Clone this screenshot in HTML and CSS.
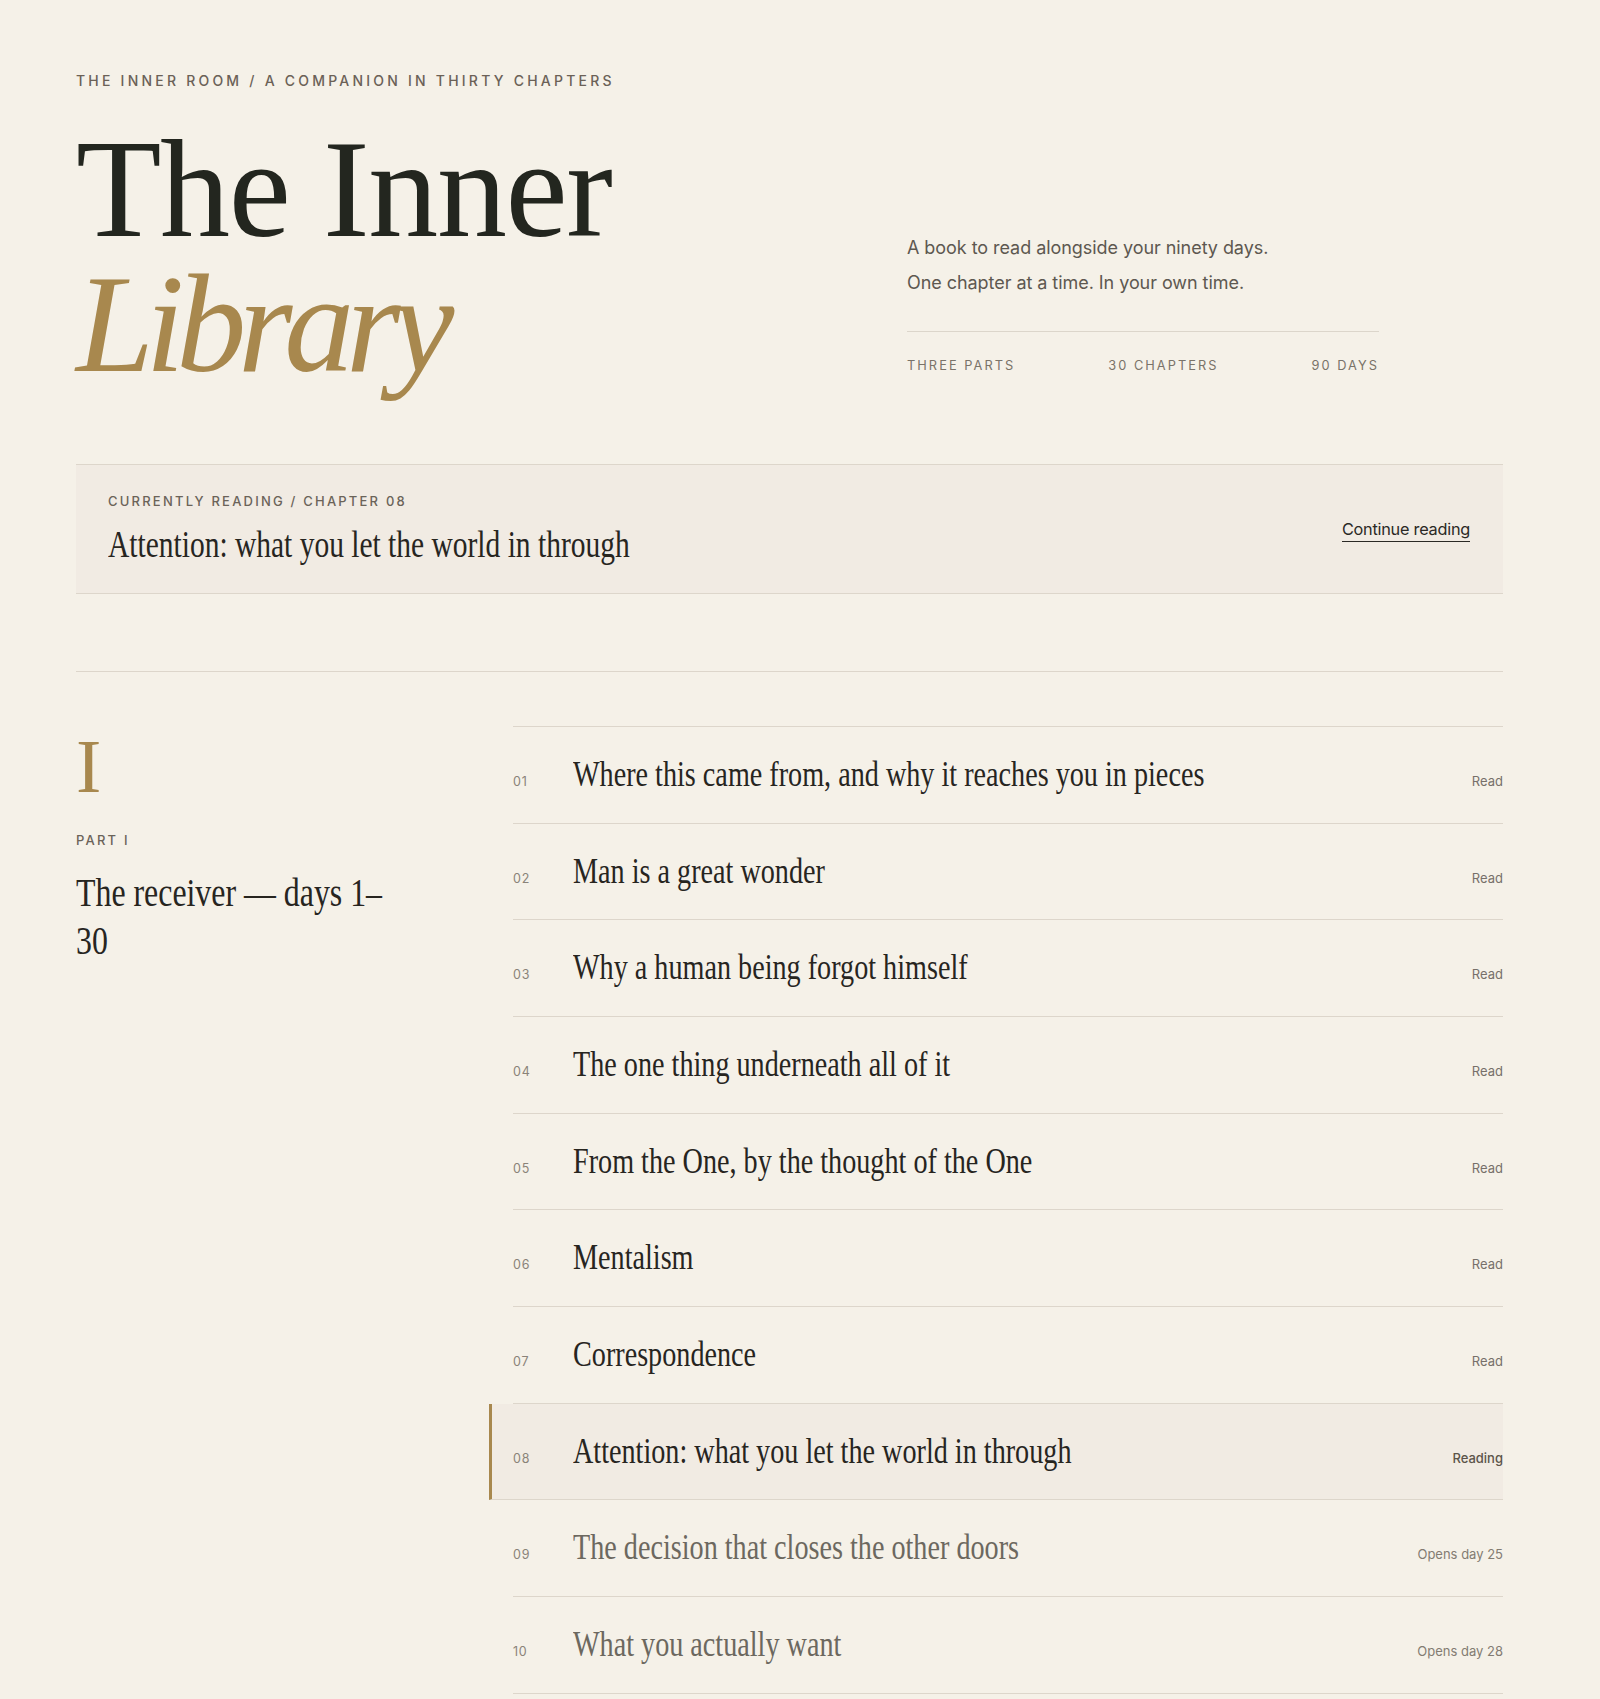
FILE: index.html
```html
<!DOCTYPE html>
<html lang="en">
<head>
<meta charset="utf-8">
<title>The Inner Library</title>
<link rel="stylesheet" href="styles.css">
</head>
<body>
<div class="page">
  <header class="hero">
    <div class="hero-main">
      <p class="eyebrow">The Inner Room / A Companion in Thirty Chapters</p>
      <h1 class="title"><span class="t1">The Inner</span><span class="t2">Library</span></h1>
    </div>
    <div class="hero-side">
      <p class="lede">A book to read alongside your ninety days.</p>
      <p class="lede">One chapter at a time. In your own time.</p>
      <div class="stats">
        <span>Three parts</span>
        <span>30 chapters</span>
        <span>90 days</span>
      </div>
    </div>
  </header>

  <section class="current">
    <div class="current-text">
      <p class="label">Currently reading / Chapter 08</p>
      <h2 class="current-title"><span class="cond">Attention: what you let the world in through</span></h2>
    </div>
    <a class="continue" href="#ch08">Continue reading</a>
  </section>

  <section class="part">
    <div class="part-head">
      <div class="numeral">I</div>
      <p class="label part-label">Part I</p>
      <h3 class="part-title"><span class="cond">The receiver — days 1–30</span></h3>
    </div>
    <ol class="chapters">
      <li class="row"><span class="num">01</span><span class="ch-title">Where this came from, and why it reaches you in pieces</span><span class="status">Read</span></li>
      <li class="row"><span class="num">02</span><span class="ch-title">Man is a great wonder</span><span class="status">Read</span></li>
      <li class="row"><span class="num">03</span><span class="ch-title">Why a human being forgot himself</span><span class="status">Read</span></li>
      <li class="row"><span class="num">04</span><span class="ch-title">The one thing underneath all of it</span><span class="status">Read</span></li>
      <li class="row"><span class="num">05</span><span class="ch-title">From the One, by the thought of the One</span><span class="status">Read</span></li>
      <li class="row"><span class="num">06</span><span class="ch-title">Mentalism</span><span class="status">Read</span></li>
      <li class="row"><span class="num">07</span><span class="ch-title">Correspondence</span><span class="status">Read</span></li>
      <li class="row row-current" id="ch08"><span class="num">08</span><span class="ch-title">Attention: what you let the world in through</span><span class="status">Reading</span></li>
      <li class="row row-locked"><span class="num">09</span><span class="ch-title">The decision that closes the other doors</span><span class="status">Opens day 25</span></li>
      <li class="row row-locked"><span class="num">10</span><span class="ch-title">What you actually want</span><span class="status">Opens day 28</span></li>
    </ol>
  </section>
</div>
</body>
</html>
```

FILE: styles.css
```css
html, body {
  margin: 0;
  padding: 0;
  background: #f5f1e8;
}

body {
  font-family: "Inter", "Liberation Sans", sans-serif;
  color: #2a2824;
}

.page {
  padding: 71px 97px 0 76px;
}

/* ---------- hero ---------- */
.hero {
  display: grid;
  grid-template-columns: 831px 472px;
  align-items: end;
}

.eyebrow {
  margin: 0 0 30px;
  font-size: 14px;
  line-height: 20px;
  letter-spacing: 0.23em;
  text-transform: uppercase;
  color: #6b6157;
  font-weight: 500;
}

.title {
  margin: 0;
  font-family: "Liberation Serif", "Times New Roman", serif;
  font-weight: 400;
  font-size: 140px;
  line-height: 135px;
  letter-spacing: -0.01em;
  color: #23261f;
}

.title .t1,
.title .t2 {
  display: block;
}

.title .t2 {
  font-style: italic;
  color: #a8884e;
  letter-spacing: -0.059em;
}

.hero-side {
  padding-bottom: 16px;
}

.lede {
  margin: 0;
  font-size: 18px;
  line-height: 35px;
  letter-spacing: -0.003em;
  color: #5d5850;
}

.lede + .lede {
  margin-bottom: 31px;
}

.stats {
  display: flex;
  justify-content: space-between;
  border-top: 1px solid #dcd6cb;
  padding-top: 25px;
  font-size: 12.8px;
  line-height: 18px;
  letter-spacing: 0.16em;
  text-transform: uppercase;
  color: #7a7369;
}

/* ---------- currently reading ---------- */
.current {
  margin-top: 73px;
  height: 130px;
  box-sizing: border-box;
  display: flex;
  align-items: center;
  justify-content: space-between;
  padding: 0 33px 0 32px;
  background: #f1ebe3;
  border-top: 1px solid #ddd6cb;
  border-bottom: 1px solid #ddd6cb;
}

.label {
  margin: 0;
  font-size: 13px;
  line-height: 18px;
  letter-spacing: 0.17em;
  text-transform: uppercase;
  color: #6b6359;
  font-weight: 500;
}

.current-title {
  margin: 11px 0 0;
  font-family: "Liberation Serif", "Times New Roman", serif;
  font-weight: 400;
  font-size: 38px;
  line-height: 46px;
  color: #27251f;
  white-space: nowrap;
}

.cond {
  display: inline-block;
  transform-origin: left center;
}

.current-title .cond {
  transform: scaleX(0.776);
}

.continue {
  font-size: 16.3px;
  line-height: 20px;
  letter-spacing: -0.015em;
  color: #2b2925;
  text-decoration: none;
  border-bottom: 1.5px solid #2b2925;
  padding-bottom: 2px;
  margin-top: 2px;
}

/* ---------- part ---------- */
.part {
  margin-top: 77px;
  border-top: 1px solid #ddd6cb;
  padding-top: 54px;
  display: grid;
  grid-template-columns: 437px 1fr;
  align-items: start;
}

.numeral {
  padding-top: 2px;
  font-family: "Liberation Serif", "Times New Roman", serif;
  font-size: 76px;
  line-height: 76px;
  color: #a8884e;
}

.part-label {
  margin-top: 27px;
}

.part-title {
  margin: 19px 0 0;
  width: 400px;
  font-family: "Liberation Serif", "Times New Roman", serif;
  font-weight: 400;
  font-size: 41px;
  line-height: 48.3px;
  color: #27251f;
  transform: scaleX(0.777);
  transform-origin: left top;
}

.part-title .cond {
  display: inline;
}

/* ---------- chapters ---------- */
.chapters {
  list-style: none;
  margin: 0;
  padding: 0;
  border-top: 1px solid #ddd6cb;
}

.row {
  display: flex;
  align-items: baseline;
  height: 96.67px;
  box-sizing: border-box;
  padding-top: 26px;
  border-bottom: 1px solid #ddd6cb;
}

.num {
  flex: none;
  width: 60px;
  font-size: 12.5px;
  letter-spacing: 0.06em;
  color: #8a8379;
}

.ch-title {
  display: inline-block;
  font-family: "Liberation Serif", "Times New Roman", serif;
  font-size: 35px;
  line-height: 44px;
  color: #27251f;
  white-space: nowrap;
  transform: scaleX(0.805);
  transform-origin: left center;
}

.status {
  margin-left: auto;
  font-size: 13px;
  color: #77706a;
}

.row-current {
  margin-left: -24px;
  padding-left: 21px;
  border-left: 3px solid #a8884e;
  background: #f1ebe3;
}

.row-current .status {
  color: #5c544a;
  font-weight: 500;
}

.row-locked .ch-title {
  color: #6c685f;
}

.row-locked .status {
  color: #837c72;
}
```
